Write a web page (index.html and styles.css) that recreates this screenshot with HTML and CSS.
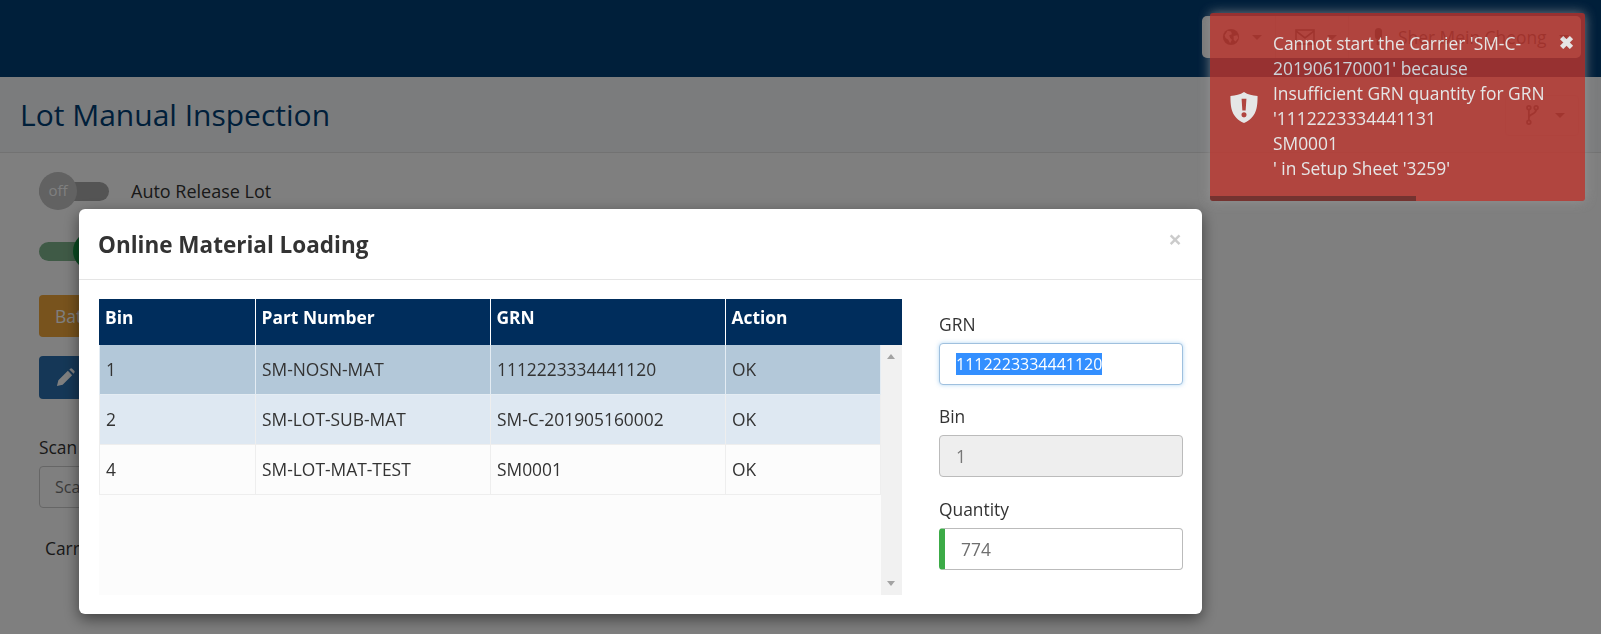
FILE: index.html
```html
<!DOCTYPE html>
<html lang="en">
<head>
  <meta charset="UTF-8">
  <title>Lot Manual Inspection</title>
  <link rel="stylesheet" href="styles.css">
</head>
<body>
  <header class="navbar">
    <nav class="user-menu">
      <span class="menu-item globe-item">
        <svg class="nav-icon" viewBox="0 0 20 20"><circle cx="10" cy="10" r="9"/><path class="cut" d="M6 3l4 1 1 3-3 1 1 3 2 2-2 4-2-4-3-2-1-3 2-3zM13 9l4-1 1 3-3 4-2-2z"/></svg>
        <i class="caret"></i>
      </span>
      <span class="menu-item mail-item">
        <svg class="nav-icon mail" viewBox="0 0 20 16"><rect x="1" y="1" width="18" height="14" fill="none" stroke-width="1.6"/><path d="M1 2l9 7 9-7" fill="none" stroke-width="1.6"/></svg>
        <i class="caret"></i>
      </span>
      <span class="menu-item user">
        <svg class="nav-icon mic" viewBox="0 0 12 20"><rect x="2" y="0" width="8" height="13" rx="4"/><path d="M4 13h4v6H4z"/></svg>
        <span class="user-name">Sher Mein Cheong</span>
        <i class="caret"></i>
      </span>
    </nav>
  </header>

  <section class="page-head">
    <h1>Lot Manual Inspection</h1>
    <button class="fork-btn">
      <svg class="fork" viewBox="0 0 14 22"><circle cx="3" cy="3" r="2"/><circle cx="11" cy="3" r="2"/><circle cx="3" cy="19" r="2"/><path d="M3 5v12M11 5c0 6-8 4-8 9"/></svg>
      <i class="caret"></i>
    </button>
  </section>

  <main class="content">
    <div class="switch-row">
      <span class="switch"><span class="knob">off</span></span>
      <span class="switch-label">Auto Release Lot</span>
    </div>
    <div class="switch-row second">
      <span class="switch on"><span class="knob"></span></span>
    </div>
    <button class="btn btn-orange">Batch</button>
    <button class="btn btn-blue">
      <svg class="pencil" viewBox="0 0 20 20"><path d="M1 19l1.500-6L12.500 3l4.500 4.500-10 10zM14 1.500l1-.7a1.500 1.500 0 0 1 2 0l2.200 2.200a1.500 1.500 0 0 1 0 2l-.7 1z"/></svg>
    </button>
    <label class="scan-label">Scan</label>
    <input class="scan-input" placeholder="Scan">
    <p class="carrier">Carrier</p>
  </main>

  <div class="backdrop"></div>

  <div class="modal">
    <div class="modal-header">
      <h2>Online Material Loading</h2>
      <span class="close">×</span>
    </div>
    <div class="modal-body">
      <div class="grid">
        <table class="grid-head">
          <tr>
            <th class="col-bin">Bin</th>
            <th class="col-part">Part Number</th>
            <th class="col-grn">GRN</th>
            <th>Action</th>
          </tr>
        </table>
        <div class="grid-scroll">
          <table class="grid-rows">
            <tr class="selected">
              <td class="col-bin">1</td>
              <td class="col-part">SM-NOSN-MAT</td>
              <td class="col-grn">1112223334441120</td>
              <td>OK</td>
            </tr>
            <tr class="odd">
              <td class="col-bin">2</td>
              <td class="col-part">SM-LOT-SUB-MAT</td>
              <td class="col-grn">SM-C-201905160002</td>
              <td>OK</td>
            </tr>
            <tr>
              <td class="col-bin">4</td>
              <td class="col-part">SM-LOT-MAT-TEST</td>
              <td class="col-grn">SM0001</td>
              <td>OK</td>
            </tr>
          </table>
          <div class="scrollbar"><i class="arrow-up"></i><i class="arrow-down"></i></div>
        </div>
      </div>
      <form class="side-form">
        <label for="grnInput">GRN</label>
        <input id="grnInput" class="field" type="text" value="1112223334441120">
        <label for="binInput">Bin</label>
        <input id="binInput" class="field" type="text" value="1" disabled>
        <label for="qtyInput">Quantity</label>
        <input id="qtyInput" class="field required" type="text" value="774">
      </form>
    </div>
  </div>

  <div class="toast">
    <svg class="toast-icon" viewBox="0 0 28 32"><path d="M14 0c4 2.500 8.500 4 14 4 0 12-1 22-14 28C1 26 0 16 0 4c5.500 0 10-1.500 14-4z"/><path class="mark" d="M11.500 7h5l-.8 12h-3.400zM14 21a2.600 2.600 0 1 1 0 5.200 2.600 2.600 0 0 1 0-5.200z"/></svg>
    <div class="toast-msg">Cannot start the Carrier 'SM-C-201906170001' because<br>Insufficient GRN quantity for GRN<br>'1112223334441131<br>SM0001<br>' in Setup Sheet '3259'</div>
    <span class="toast-close">✖</span>
    <div class="toast-progress"></div>
  </div>

  <script>
    document.getElementById("grnInput").select();
  </script>
</body>
</html>
```

FILE: styles.css
```css
* {
  box-sizing: border-box;
}
html, body {
  height: 100%;
}
body {
  margin: 0;
  overflow: hidden;
  font-family: "Open Sans", sans-serif;
  font-size: 16px;
  color: #333;
  background: #fff;
}

.navbar {
  height: 77px;
  background: #003e75;
  display: flex;
  justify-content: flex-end;
  padding: 16px 20px 0 0;
}
.user-menu {
  display: flex;
  height: 42px;
  width: 379px;
  background: #f4f4f4;
  border-radius: 5px;
  color: #555;
}
.menu-item {
  display: flex;
  align-items: center;
  gap: 12px;
  padding: 0 0 0 20px;
  border-right: 1px solid #ddd;
  white-space: nowrap;
}
.globe-item {
  width: 74px;
}
.mail-item {
  width: 73px;
  padding-left: 19px;
}
.menu-item.user {
  border-right: 0;
  flex: 1;
  padding-left: 24px;
  gap: 14px;
}
.user-name {
  font-size: 17.4px;
}
.nav-icon {
  width: 18px;
  height: 18px;
  fill: #555;
}
.nav-icon .cut {
  fill: #f4f4f4;
}
.nav-icon.mail {
  stroke: #555;
  width: 20px;
}
.nav-icon.mic {
  width: 11px;
}
.caret {
  display: inline-block;
  border-top: 5px solid #666;
  border-left: 5px solid transparent;
  border-right: 5px solid transparent;
}
.user .caret {
  margin-left: -2px;
}

.page-head {
  height: 76px;
  background: #f6f8fb;
  border-bottom: 1px solid #e4e4e4;
  display: flex;
  align-items: center;
  justify-content: space-between;
  padding: 0 22px 0 20px;
}
.page-head h1 {
  margin: 0;
  font-size: 30px;
  font-weight: 400;
  color: #003e75;
}
.fork-btn {
  width: 74px;
  height: 41px;
  background: #f6f8fb;
  border: 1px solid #ececec;
  border-radius: 4px;
  display: flex;
  align-items: center;
  justify-content: center;
  gap: 16px;
  padding: 0 0 0 6px;
  margin-top: 1px;
}
.fork {
  width: 13px;
  height: 20px;
  fill: none;
  stroke: #666;
  stroke-width: 2;
}

.content {
  padding: 19px 39px;
  display: flex;
  flex-direction: column;
  align-items: flex-start;
}
.switch-row {
  display: flex;
  align-items: center;
  height: 38px;
}
.switch-row.second {
  margin-top: 22px;
}
.switch {
  position: relative;
  width: 70px;
  height: 19px;
  border-radius: 10px;
  background: #a8a8a8;
  display: block;
}
.switch.on {
  background: #7fb58d;
}
.knob {
  position: absolute;
  left: 0;
  top: -10px;
  width: 38px;
  height: 38px;
  border-radius: 50%;
  background: #c4c4c4;
  color: #fff;
  font-size: 15px;
  text-align: center;
  line-height: 36px;
}
.switch.on .knob {
  left: 34px;
  background: #159844;
}
.switch-label {
  margin-left: 22px;
  font-size: 18px;
}
.btn {
  width: 120px;
  height: 42px;
  border: 0;
  border-radius: 4px;
  color: #fff;
  font-family: inherit;
  font-size: 17.4px;
  text-align: left;
  padding: 0 16px;
}
.btn-orange {
  margin-top: 25px;
  background: #f0a63a;
}
.btn-blue {
  margin-top: 19px;
  height: 43px;
  background: #2a6fae;
}
.pencil {
  display: block;
  width: 19px;
  height: 19px;
  margin-left: 1px;
  fill: #fff;
}
.scan-label {
  margin-top: 36px;
  font-size: 17.4px;
  font-weight: 500;
}
.scan-input {
  margin-top: 7px;
  width: 300px;
  height: 42px;
  border: 1px solid #ccc;
  border-radius: 4px;
  padding: 0 15px;
  font-family: inherit;
  font-size: 16px;
}
.carrier {
  margin: 28px 0 0 6px;
  font-size: 17.4px;
}

.backdrop {
  position: fixed;
  inset: 0;
  background: rgba(0, 0, 0, 0.5);
}

.modal {
  position: fixed;
  left: 79px;
  top: 209px;
  width: 1123px;
  height: 405px;
  background: #fff;
  border-radius: 6px;
  box-shadow: 0 5px 15px rgba(0, 0, 0, 0.5);
}
.modal-header {
  height: 71px;
  border-bottom: 1px solid #e5e5e5;
  padding: 0 20px 0 19px;
  display: flex;
  align-items: center;
  justify-content: space-between;
}
.modal-header h2 {
  margin: 0;
  font-size: 22.5px;
  font-weight: 700;
  color: #333;
}
.close {
  font-size: 24px;
  font-weight: 700;
  color: #000;
  opacity: 0.2;
  margin: -12px 0 0 0;
}
.modal-body {
  display: flex;
  padding: 19px 19px 0 20px;
}

.grid {
  width: 803px;
  background: #fcfcfc;
  height: 296px;
}
.grid table {
  border-collapse: collapse;
  table-layout: fixed;
}
.grid-head {
  width: 803px;
  background: #002d5c;
  color: #fff;
}
.grid-head th {
  height: 46px;
  padding: 6px 6px 0;
  text-align: left;
  font-size: 17.4px;
  font-weight: 700;
  border-right: 1px solid #fff;
  vertical-align: top;
}
.grid-head th:last-child {
  border-right: 0;
}
.col-bin {
  width: 156px;
}
.col-part {
  width: 235px;
}
.col-grn {
  width: 235px;
}
.grid-scroll {
  display: flex;
  height: 250px;
}
.grid-rows {
  width: 782px;
  height: 149px;
}
.grid-rows td {
  height: 50px;
  padding: 0 6px;
  font-size: 17.4px;
  color: #333;
  border: 1px solid #eee;
  border-top: 0;
}
.grid-rows tr.selected td {
  background: #b3c8d9;
  border-color: #e4ecf3;
  height: 49px;
}
.grid-rows tr.odd td {
  background: #dee8f2;
}
.scrollbar {
  position: relative;
  width: 21px;
  margin-left: auto;
  background: #f1f1f1;
}
.arrow-up, .arrow-down {
  position: absolute;
  left: 6px;
  border-left: 4px solid transparent;
  border-right: 4px solid transparent;
}
.arrow-up {
  top: 9px;
  border-bottom: 5px solid #a3a3a3;
}
.arrow-down {
  bottom: 9px;
  border-top: 5px solid #a3a3a3;
}

.side-form {
  width: 244px;
  margin-left: 37px;
  display: flex;
  flex-direction: column;
}
.side-form label {
  font-size: 17.4px;
  line-height: 22px;
  margin-top: 20.4px;
  height: 30px;
  color: #333;
}
.side-form label:first-child {
  margin-top: 14px;
}
.field {
  height: 42px;
  border: 1px solid #bbb;
  border-radius: 4px;
  padding: 0 16px;
  font-family: inherit;
  font-size: 16px;
  color: #6f6f6f;
  background: #fff;
  outline: 0;
}
.field:focus {
  border-color: #9fc0de;
  box-shadow: 0 0 4px rgba(102, 175, 233, 0.5);
}
.field::selection {
  background: #338fff;
  color: #fff;
}
.field:disabled {
  background: #eee;
  color: #777;
  font-size: 17.4px;
}
.field.required {
  border-left: 6px solid #3cab47;
  font-size: 17.4px;
}

.toast {
  position: fixed;
  left: 1210px;
  top: 13px;
  width: 375px;
  height: 188px;
  background: #bd362f;
  opacity: 0.8;
  border-radius: 3px;
  box-shadow: 0 0 12px #999;
  color: #fff;
  padding: 18px 34px 0 63px;
  overflow: hidden;
}
.toast-msg {
  line-height: 25px;
  font-size: 17.4px;
}
.toast-icon {
  position: absolute;
  left: 20px;
  top: 79px;
  width: 28px;
  height: 31px;
  fill: #fff;
}
.toast-icon .mark {
  fill: #bd362f;
}
.toast-close {
  position: absolute;
  right: 11px;
  top: 17px;
  font-size: 18px;
  font-weight: 700;
  color: #fff;
}
.toast-progress {
  position: absolute;
  left: 0;
  bottom: 0;
  width: 206px;
  height: 5px;
  background: #000;
  opacity: 0.4;
}
```
